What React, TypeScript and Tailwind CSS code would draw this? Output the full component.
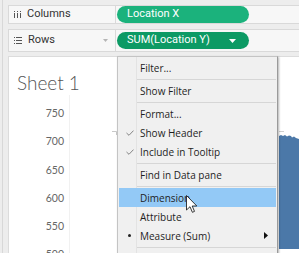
import React from "react";

const ColumnsIcon = () => (
  <svg width="7" height="7" viewBox="0 0 7 7" className="shrink-0">
    <rect x="0" y="0" width="1" height="1" fill="#555" />
    <rect x="0" y="2" width="1" height="5" fill="#555" />
    <rect x="3" y="0" width="1" height="1" fill="#555" />
    <rect x="3" y="2" width="1" height="5" fill="#555" />
    <rect x="6" y="0" width="1" height="1" fill="#555" />
    <rect x="6" y="2" width="1" height="5" fill="#555" />
  </svg>
);

const RowsIcon = () => (
  <svg width="8" height="7" viewBox="0 0 8 7" className="shrink-0">
    <rect x="0" y="0" width="1" height="1" fill="#555" />
    <rect x="2" y="0" width="6" height="1" fill="#555" />
    <rect x="0" y="3" width="1" height="1" fill="#555" />
    <rect x="2" y="3" width="6" height="1" fill="#555" />
    <rect x="0" y="6" width="1" height="1" fill="#555" />
    <rect x="2" y="6" width="6" height="1" fill="#555" />
  </svg>
);

const Check = () => (
  <svg width="8" height="6" viewBox="0 0 8 6">
    <path d="M0.5 3 L3 5.3 L7.5 0.6" fill="none" stroke="#777" strokeWidth="0.9" />
  </svg>
);

type Item =
  | { kind: "sep" }
  | { kind: "item"; label: string; mark?: "check" | "dot"; sub?: boolean; active?: boolean };

const items: Item[] = [
  { kind: "item", label: "Filter..." },
  { kind: "sep" },
  { kind: "item", label: "Show Filter" },
  { kind: "sep" },
  { kind: "item", label: "Format..." },
  { kind: "item", label: "Show Header", mark: "check" },
  { kind: "item", label: "Include in Tooltip", mark: "check" },
  { kind: "sep" },
  { kind: "item", label: "Find in Data pane" },
  { kind: "sep" },
  { kind: "item", label: "Dimension", active: true },
  { kind: "item", label: "Attribute" },
  { kind: "item", label: "Measure (Sum)", mark: "dot", sub: true },
  { kind: "sep" },
];

const ContextMenu = () => (
  <div className="absolute left-[117px] top-[56px] w-[161px] h-[215px] bg-[#f0f0f0] border border-[#c4c4c4] border-r-[#9a9a9a] shadow-[1px_1px_2px_rgba(0,0,0,0.3)] pt-[1px] font-['Open_Sans',sans-serif] text-[10px] text-[#1e1e1e]">
    {/* icon gutter line */}
    <div className="absolute left-[18px] top-0 bottom-0 w-px bg-[#e3e3e3]" />
    {items.map((it, i) =>
      it.kind === "sep" ? (
        <div key={i} className="relative h-[4px] ml-[19px] mr-[1px] flex items-center">
          <div className="h-px w-full bg-[#d6d6d6]" />
        </div>
      ) : (
        <div
          key={i}
          className={`relative h-[19px] mx-[1px] flex items-center ${it.active ? "bg-[#93c9f6]" : ""}`}
        >
          <div className="w-[21px] flex justify-center">
            {it.mark === "check" && <Check />}
            {it.mark === "dot" && <div className="w-[3px] h-[3px] rounded-full bg-[#222]" />}
          </div>
          <span className="flex-1 leading-none">{it.label}</span>
          {it.sub && (
            <svg width="4" height="7" viewBox="0 0 4 7" className="mr-[8px]">
              <path d="M0 0 L4 3.5 L0 7 Z" fill="#111" />
            </svg>
          )}
        </div>
      )
    )}
  </div>
);

const Cursor = () => (
  <svg
    width="12"
    height="19"
    viewBox="0 0 12 19"
    className="absolute left-[186px] top-[195px]"
  >
    <path
      d="M0.5 0.5 L0.5 15 L4 11.7 L6.4 17.3 L8.5 16.4 L6.2 11 L10.8 11 Z"
      fill="#fff"
      stroke="#222"
      strokeWidth="0.9"
      strokeLinejoin="round"
    />
  </svg>
);

const Shelf = ({
  icon,
  label,
  caret,
  children,
}: {
  icon: React.ReactNode;
  label: string;
  caret?: boolean;
  children: React.ReactNode;
}) => (
  <div className="h-[23px] flex border-y border-[#d9d9d9]">
    <div className="w-[108px] shrink-0 flex items-center border-x border-[#d9d9d9] bg-[#f7f7f7] pl-[5px] gap-[6px] text-[11px] text-[#333]">
      {icon}
      <span className="flex-1">{label}</span>
      {caret && (
        <svg width="5" height="3" viewBox="0 0 5 3" className="mr-[7px]">
          <path d="M0 0 L5 0 L2.5 3 Z" fill="#b5b5b5" />
        </svg>
      )}
    </div>
    <div className="flex-1 flex items-center bg-[#f7f7f7]">{children}</div>
  </div>
);

const ticks = ["750", "700", "650", "600", "550", "500"];

export default function App() {
  return (
    <div className="relative w-[299px] h-[253px] overflow-hidden bg-[#ededed] flex font-['Roboto',sans-serif]">
      {/* left edge */}
      <div className="w-[8px] shrink-0 flex">
        <div className="ml-[2px] w-px h-full bg-[#d8d8d8]" />
      </div>

      <div className="flex-1 flex flex-col pt-[5px]">
        <Shelf icon={<ColumnsIcon />} label="Columns">
          <div className="ml-[1px] h-[17px] w-[132px] rounded-full bg-[#1bb27c] flex items-center pl-[10px] text-[11px] text-white">
            Location X
          </div>
        </Shelf>

        <div className="mt-[5px]">
          <Shelf icon={<RowsIcon />} label="Rows" caret>
            <div className="ml-[1px] h-[17px] w-[132px] rounded-full bg-[#0c9a64] flex items-center pl-[10px] pr-[13px] text-[11px] text-white">
              <span className="flex-1">SUM(Location Y)</span>
              <svg width="7" height="4" viewBox="0 0 7 4">
                <path d="M0 0 L7 0 L3.5 4 Z" fill="#fff" />
              </svg>
            </div>
          </Shelf>
        </div>

        {/* worksheet pane */}
        <div className="mt-[4px] flex-1 flex flex-col bg-white border-t border-l border-[#dcdcdc]">
          <div className="pl-[8px] pt-[15px] h-[37px] font-['Lato',sans-serif] font-light text-[19px] leading-[22px] text-[#555]">
            Sheet 1
          </div>
          <div className="mt-[1px] flex-1 flex">
            <div className="w-[60px] shrink-0 flex flex-col items-end pr-[5px] pt-[5px] font-['Lato',sans-serif] text-[10.5px] text-[#666]">
              {ticks.map((t) => (
                <div key={t} className="h-[28.2px] shrink-0 flex items-center">
                  {t}
                </div>
              ))}
            </div>
            <div className="relative flex-1 border-l border-[#f1f1f1]">
              <svg className="absolute inset-0" width="229" height="154" viewBox="0 0 229 154">
                <path d="M42 36.5 H46.5 V40" fill="none" stroke="#c8c8c8" strokeWidth="1" />
                <path d="M209 36.5 H214" fill="none" stroke="#d0d0d0" strokeWidth="1" />
                <path
                  d="M209 41 L211 40 L213 41 L215 40 L217 41.5 L219 40.5 L221 41 L222 42.5 L224 41.5 L226 43 L229 44 L229 154 L209 154 Z"
                  fill="#4b78a8"
                />
              </svg>
            </div>
          </div>
        </div>
      </div>

      <ContextMenu />
      <Cursor />
    </div>
  );
}
